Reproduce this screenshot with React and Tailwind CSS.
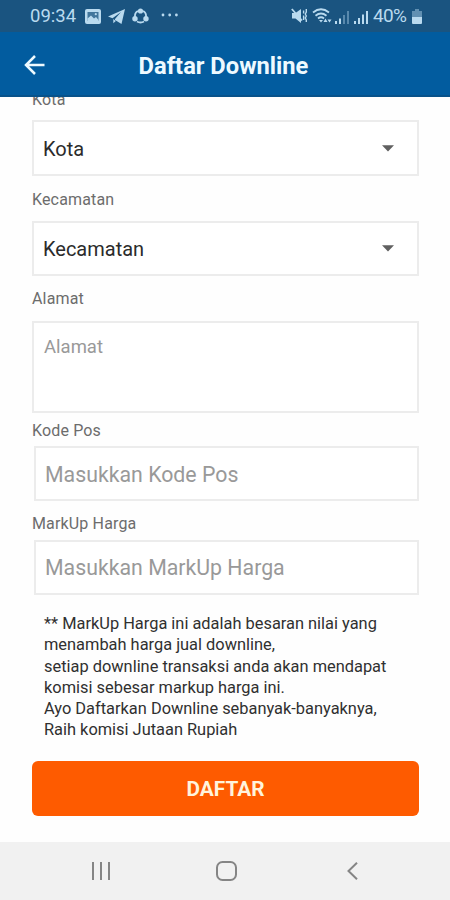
import React from "react";

function Label({ children, className = "" }) {
  return (
    <div className={`flex h-5 items-center text-[16px] leading-5 tracking-[0.15px] text-[#6c6c6c] ${className}`}>
      {children}
    </div>
  );
}

function SelectBox({ value, className = "" }) {
  return (
    <div className={`flex w-[387px] items-center justify-between border-2 border-[#ececec] bg-white pr-[23px] pl-[9px] ${className}`}>
      <span className="pt-px text-[20px] text-[#2b2b2b]">{value}</span>
      <svg width="12" height="7" viewBox="0 0 12 7">
        <path d="M0 .3h12L6 6.5z" fill="#606060" />
      </svg>
    </div>
  );
}

function StatusBar() {
  return (
    <div className="flex h-8 shrink-0 items-center justify-between bg-[#1a5480] pr-[28px] pl-[30px] text-[#b9daef]">
      <div className="flex items-center">
        <span className="w-[47px] text-[18.5px] leading-8">09:34</span>
        <svg className="ml-2" width="16" height="15" viewBox="0 0 16 15">
          <rect width="16" height="15" rx="2" fill="currentColor" />
          <path d="M2.500 3h11v9h-11z" fill="#1a5480" opacity=".75" />
          <path d="M2.500 12V9.500L6 6.500l3 3L11 8l2.500 3v1z" fill="currentColor" />
          <circle cx="10.800" cy="5.200" r="1.100" fill="currentColor" />
        </svg>
        <svg className="ml-[7px]" width="17" height="15" viewBox="0 0 17 15">
          <path d="M17 0 0 7.500 4.500 9.200 13 3 7 10v1l6.500 4z" fill="currentColor" />
          <path d="M5.300 10v4.200L7.800 12z" fill="currentColor" />
        </svg>
        <svg className="ml-[7px]" width="17" height="16" viewBox="0 0 17 16" fill="none" stroke="currentColor">
          <path d="M3 10V7a5.500 5 0 0 1 3-4M11 3a5.500 5 0 0 1 3 4v3M5 13.500q3.500 2 7 0" strokeWidth="1.800" />
          <circle cx="8.500" cy="3" r="2.600" fill="currentColor" stroke="none" />
          <circle cx="3" cy="10.800" r="2.700" fill="currentColor" stroke="none" />
          <circle cx="14" cy="10.800" r="2.700" fill="currentColor" stroke="none" />
        </svg>
        <svg className="ml-[12px] -mt-0.5" width="18" height="4" viewBox="0 0 18 4" fill="currentColor">
          <circle cx="2" cy="2" r="1.400" />
          <circle cx="8.700" cy="2" r="1.400" />
          <circle cx="15.400" cy="2" r="1.400" />
        </svg>
      </div>
      <div className="flex items-center">
        <svg width="17" height="16" viewBox="0 0 17 16">
          <path d="M1 5h3.500L10 1v14L4.500 10.500H1z" fill="currentColor" />
          <path d="M.800 1 11 12.500" stroke="currentColor" strokeWidth="1.800" />
          <path d="M12.600 2.500v3M12.600 7.500v4.500M15.300 1v3l-1 2 1 2-1 2 1 2v2" fill="none" stroke="currentColor" strokeWidth="1.400" />
        </svg>
        <svg className="ml-[4px]" width="20" height="16" viewBox="0 0 20 16" fill="none" stroke="currentColor" strokeWidth="1.800">
          <path d="M1 4.500q8-6.500 16 0M3.500 7.700q5.500-4.500 11 0M6 10.500q3-2.500 6 0" />
          <path d="m7 12 2 2.500 2-2.500z" fill="currentColor" stroke="none" />
          <path d="m11.500 14 2-3.500 2 3.500zM15.500 11.500h4l-2 3z" fill="currentColor" stroke="none" />
        </svg>
        <svg className="ml-[3px] mt-0.5" width="14" height="14" viewBox="0 0 14 14" fill="currentColor">
          <path d="M0 11h2v3H0zM4 8.500h2V14H4z" />
          <path d="M8 5h2v9H8zM12 1h2v13h-2z" opacity=".4" />
        </svg>
        <svg className="ml-[5px] mt-0.5" width="14" height="14" viewBox="0 0 14 14" fill="currentColor">
          <path d="M0 11h2v3H0zM4 8h2v6H4zM8 4.500h2V14H8zM12 1h2v13h-2z" />
        </svg>
        <span className="ml-[5px] w-[35px] text-[19px] leading-8 tracking-[-0.7px]">40%</span>
        <svg className="ml-[4px]" width="10" height="15" viewBox="0 0 10 15" fill="currentColor">
          <path d="M3 0h4v2h3v6H0V2h3z" opacity=".45" />
          <path d="M0 8h10v6q0 1-1 1H1q-1 0-1-1z" />
        </svg>
      </div>
    </div>
  );
}

export default function App() {
  return (
    <div className="flex h-[900px] w-[450px] flex-col overflow-hidden bg-[#fefefe] font-[Roboto,sans-serif]">
      <StatusBar />
      <header className="grid h-[65px] shrink-0 grid-cols-[1fr_auto_1fr] items-center border-b-2 border-[#08528a] bg-[#025c9f] pt-[3px] pr-[3px] text-[#eefaff]">
        <svg className="ml-6" width="21" height="20" viewBox="0 0 21 20" fill="none" stroke="currentColor" strokeWidth="2.500">
          <path d="M20.500 10H2M11 1 2 10l9 9" />
        </svg>
        <h1 className="pt-px text-[23.7px] leading-8 font-bold">Daftar Downline</h1>
      </header>
      <main className="flex-1 overflow-hidden pl-8">
        <Label className="-mt-[7px]">Kota</Label>
        <SelectBox value="Kota" className="mt-[10px] h-14" />
        <Label className="mt-[14px]">Kecamatan</Label>
        <SelectBox value="Kecamatan" className="mt-[11px] h-[55px]" />
        <Label className="mt-[13px]">Alamat</Label>
        <div className="mt-3 h-[92px] w-[387px] border-2 border-[#ececec] bg-white px-[10px] pt-3 text-[18.5px] leading-6 text-[#999]">
          Alamat
        </div>
        <Label className="mt-2">Kode Pos</Label>
        <div className="mt-[5px] ml-0.5 flex h-[55px] w-[385px] items-center border-2 border-[#ececec] bg-white px-[9px] pt-0.5 text-[21.3px] text-[#999]">
          Masukkan Kode Pos
        </div>
        <Label className="mt-[13px]">MarkUp Harga</Label>
        <div className="mt-[6px] ml-0.5 flex h-[55px] w-[385px] items-center border-2 border-[#ececec] bg-white px-[9px] pt-px text-[21.3px] text-[#999]">
          Masukkan MarkUp Harga
        </div>
        <div className="mt-[18px] ml-3 text-[16.4px] leading-[21.3px] whitespace-nowrap text-[#303030]">
          <p>** MarkUp Harga ini adalah besaran nilai yang</p>
          <p>menambah harga jual downline,</p>
          <p>setiap downline transaksi anda akan mendapat</p>
          <p>komisi sebesar markup harga ini.</p>
          <p>Ayo Daftarkan Downline sebanyak-banyaknya,</p>
          <p>Raih komisi Jutaan Rupiah</p>
        </div>
        <button className="mt-5 flex h-[55px] w-[387px] items-center justify-center rounded-md bg-[#fe5b00] pt-0.5 text-[20.8px] font-bold text-[#fff3dc]">
          DAFTAR
        </button>
      </main>
      <nav className="flex h-[58px] shrink-0 items-center justify-between bg-[#f1f1f1] pr-[92px] pl-[91px] text-[#858585]">
        <svg width="20" height="18" viewBox="0 0 20 18" stroke="currentColor" strokeWidth="2">
          <path d="M2 0v18M10 0v18M18 0v18" />
        </svg>
        <svg className="mr-1.5" width="21" height="20" viewBox="0 0 21 20" fill="none" stroke="currentColor" strokeWidth="2">
          <rect x="1" y="1" width="19" height="18" rx="5.500" />
        </svg>
        <svg width="11" height="18" viewBox="0 0 11 18" fill="none" stroke="currentColor" strokeWidth="2">
          <path d="M10 .800 1.500 9l8.500 8.200" />
        </svg>
      </nav>
    </div>
  );
}
